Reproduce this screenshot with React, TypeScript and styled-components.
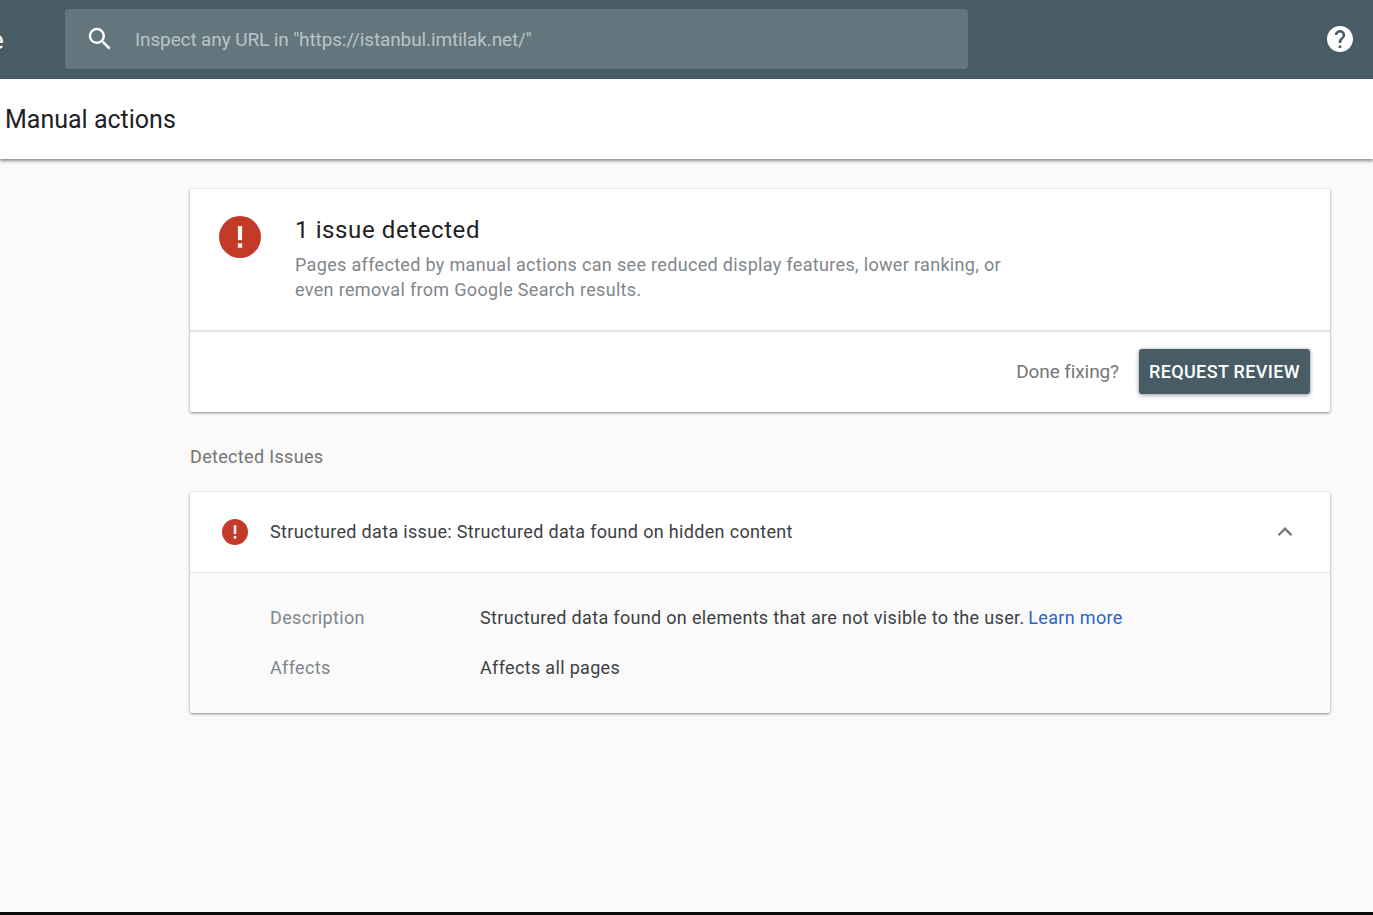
import React from 'react';
import styled, { createGlobalStyle } from 'styled-components';

const GlobalStyle = createGlobalStyle`
	html, body {
		margin: 0;
		padding: 0;
		height: 100%;
		overflow: hidden;
		background: #fafafa;
		font-family: Roboto, 'Liberation Sans', sans-serif;
	}
`;

const Page = styled.div`
	display: flex;
	flex-direction: column;
	height: 915px;
	background: #fafafa;
	border-bottom: 3px solid #0a0a0a;
	box-sizing: border-box;
`;

const TopBar = styled.header`
	display: flex;
	align-items: center;
	height: 79px;
	flex-shrink: 0;
	box-sizing: border-box;
	background: #485c65;
	padding: 0 20px 2px 0;
`;

const Brand = styled.div`
	width: 65px;
	height: 100%;
	flex-shrink: 0;
	display: flex;
	align-items: center;
	overflow: hidden;
	color: #fff;
	font-size: 26px;
	padding-top: 3px;
	box-sizing: border-box;

	span {
		margin-left: -10px;
	}
`;

const SearchBox = styled.div`
	display: flex;
	align-items: center;
	width: 903px;
	height: 60px;
	background: #64767d;
	border-radius: 4px;
	color: #b9c3c7;
	font-size: 19px;
	letter-spacing: -0.12px;
`;

const SearchIcon = styled.svg`
	width: 30px;
	height: 30px;
	margin: 0 20px;
	fill: #fff;
`;

const SearchText = styled.span`
	padding-top: 2px;
`;

const HelpButton = styled.svg`
	width: 26px;
	height: 26px;
	margin-left: auto;
	fill: #fff;
`;

const TitleBar = styled.div`
	display: flex;
	align-items: center;
	height: 80px;
	flex-shrink: 0;
	box-sizing: border-box;
	background: #fff;
	padding: 1px 0 0 5px;
	font-size: 25px;
	color: #202124;
	box-shadow: 0 2px 3px rgba(0, 0, 0, 0.45);
	position: relative;
`;

const Main = styled.main`
	flex: 1;
	padding: 30px 43px 0 190px;
	font-size: 18px;
	letter-spacing: 0.33px;
`;

const Card = styled.section`
	background: #fff;
	border-radius: 2px;
	box-shadow: 0 1px 3px rgba(0, 0, 0, 0.45);
`;

const Summary = styled.div`
	display: flex;
	height: 143px;
	padding: 26px 0 0 29px;
	box-sizing: border-box;
	border-bottom: 2px solid #e3e3e3;
`;

const SummaryIcon = styled.svg`
	width: 42px;
	height: 42px;
	margin-top: 1px;
	margin-right: 34px;
	flex-shrink: 0;
`;

const SummaryTitle = styled.h2`
	margin: 0;
	font-size: 24px;
	line-height: 30px;
	font-weight: 400;
	color: #202124;
	letter-spacing: 0.6px;
`;

const SummaryText = styled.p`
	margin: 7px 0 0;
	width: 720px;
	font-size: 18px;
	line-height: 25px;
	color: #80868b;
`;

const ActionRow = styled.div`
	display: flex;
	align-items: center;
	justify-content: flex-end;
	gap: 20px;
	height: 80px;
	box-sizing: border-box;
	padding: 0 20px 2px 0;
`;

const DoneLabel = styled.span`
	font-size: 19px;
	letter-spacing: -0.1px;
	color: #757575;
`;

const ReviewButton = styled.button`
	height: 45px;
	width: 171px;
	padding: 0;
	border: 0;
	border-radius: 3px;
	background: #485c65;
	color: #fff;
	font-family: inherit;
	font-size: 18px;
	font-weight: 500;
	letter-spacing: 0.35px;
	box-shadow: 0 1px 4px rgba(0, 0, 0, 0.45);
`;

const SectionLabel = styled.div`
	margin: 33px 0 23px;
	line-height: 24px;
	color: #757575;
`;

const IssueHeader = styled.div`
	display: flex;
	align-items: center;
	height: 80px;
	padding: 0 32px;
	border-bottom: 1px solid #e0e0e0;
	color: #3c4043;
`;

const IssueTitle = styled.span`
	padding-bottom: 2px;
`;

const IssueIcon = styled.svg`
	width: 26px;
	height: 26px;
	margin-right: 22px;
	flex-shrink: 0;
`;

const Chevron = styled.svg`
	width: 26px;
	height: 26px;
	margin-left: auto;
	fill: none;
	stroke: #757575;
	stroke-width: 2.2;
`;

const IssueBody = styled.div`
	display: grid;
	grid-template-columns: 210px 1fr;
	grid-auto-rows: 50px;
	align-items: center;
	padding: 19px 0 21px 80px;
	background: #fafafa;
	border-radius: 0 0 2px 2px;
`;

const RowLabel = styled.div`
	color: #80868b;
`;

const RowValue = styled.div`
	color: #3c4043;
`;

const LearnMore = styled.a`
	margin-left: -1px;
	color: #2a63c9;
	text-decoration: none;
`;

const ErrorGlyph = () => (
	<>
		<circle cx='12' cy='12' r='12' fill='#c53929' />
		<rect x='10.8' y='5.8' width='2.4' height='8' fill='#fff' />
		<rect x='10.8' y='15.6' width='2.4' height='2.5' fill='#fff' />
	</>
);

const App = () => {
	return (
		<Page>
			<GlobalStyle />
			<TopBar>
				<Brand>
					<span>e</span>
				</Brand>
				<SearchBox>
					<SearchIcon viewBox='0 0 24 24'>
						<path d='M15.5 14h-.79l-.28-.27A6.47 6.47 0 0 0 16 9.5 6.5 6.5 0 1 0 9.5 16c1.61 0 3.09-.59 4.23-1.57l.27.28v.79l5 4.99L20.49 19l-4.99-5zm-6 0C7.01 14 5 11.99 5 9.5S7.01 5 9.5 5 14 7.01 14 9.5 11.99 14 9.5 14z' />
					</SearchIcon>
					<SearchText>Inspect any URL in "https://istanbul.imtilak.net/"</SearchText>
				</SearchBox>
				<HelpButton viewBox='2 2 20 20'>
					<path d='M12 2C6.48 2 2 6.48 2 12s4.48 10 10 10 10-4.48 10-10S17.52 2 12 2zm1 17h-2v-2h2v2zm2.07-7.75l-.9.92C13.45 12.9 13 13.5 13 15h-2v-.5c0-1.1.45-2.1 1.17-2.83l1.24-1.26c.37-.36.59-.86.59-1.41 0-1.1-.9-2-2-2s-2 .9-2 2H8c0-2.21 1.79-4 4-4s4 1.79 4 4c0 .88-.36 1.68-.93 2.25z' />
				</HelpButton>
			</TopBar>
			<TitleBar>Manual actions</TitleBar>
			<Main>
				<Card>
					<Summary>
						<SummaryIcon viewBox='0 0 24 24'>
							<ErrorGlyph />
						</SummaryIcon>
						<div>
							<SummaryTitle>1 issue detected</SummaryTitle>
							<SummaryText>
								Pages affected by manual actions can see reduced display features, lower ranking, or even removal from
								Google Search results.
							</SummaryText>
						</div>
					</Summary>
					<ActionRow>
						<DoneLabel>Done fixing?</DoneLabel>
						<ReviewButton>REQUEST REVIEW</ReviewButton>
					</ActionRow>
				</Card>
				<SectionLabel>Detected Issues</SectionLabel>
				<Card>
					<IssueHeader>
						<IssueIcon viewBox='0 0 24 24'>
							<ErrorGlyph />
						</IssueIcon>
						<IssueTitle>Structured data issue: Structured data found on hidden content</IssueTitle>
						<Chevron viewBox='0 0 24 24'>
							<path d='M6 15l6-6 6 6' />
						</Chevron>
					</IssueHeader>
					<IssueBody>
						<RowLabel>Description</RowLabel>
						<RowValue>
							Structured data found on elements that are not visible to the user. <LearnMore href='#'>Learn more</LearnMore>
						</RowValue>
						<RowLabel>Affects</RowLabel>
						<RowValue>Affects all pages</RowValue>
					</IssueBody>
				</Card>
			</Main>
		</Page>
	);
};

export default App;
